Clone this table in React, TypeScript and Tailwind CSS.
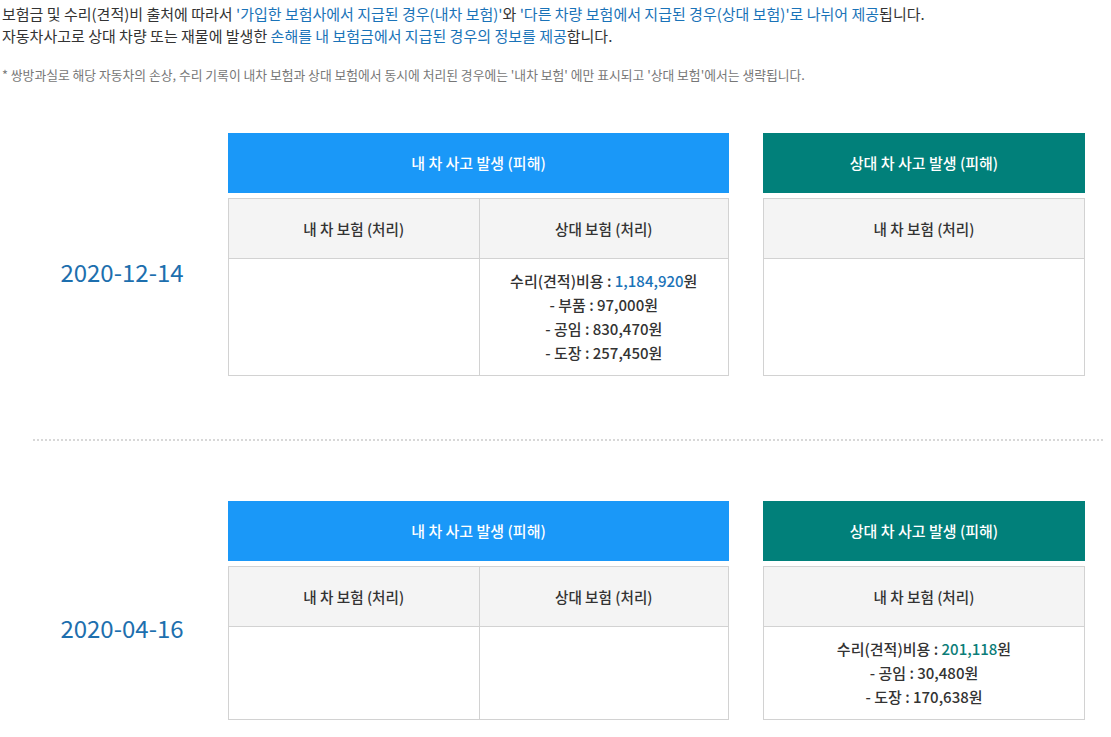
import React from "react";

type Line = { label: string; value: string; accent?: boolean };

type Section = {
  date: string;
  mine: Line[];
  other: Line[];
  received: Line[];
};

const sections: Section[] = [
  {
    date: "2020-12-14",
    mine: [],
    other: [
      { label: "수리(견적)비용 : ", value: "1,184,920", accent: true },
      { label: "- 부품 : ", value: "97,000" },
      { label: "- 공임 : ", value: "830,470" },
      { label: "- 도장 : ", value: "257,450" },
    ],
    received: [],
  },
  {
    date: "2020-04-16",
    mine: [],
    other: [],
    received: [
      { label: "수리(견적)비용 : ", value: "201,118", accent: true },
      { label: "- 공임 : ", value: "30,480" },
      { label: "- 도장 : ", value: "170,638" },
    ],
  },
];

const Cell = ({ lines, color }: { lines: Line[]; color: string }) => (
  <div className="flex flex-col items-center py-[10px] text-[15px] leading-[24px] font-medium text-[#333]">
    {lines.map((l, i) => (
      <div key={i}>
        {l.label}
        <span className={l.accent ? color : ""}>{l.value}</span>원
      </div>
    ))}
  </div>
);

const HeadCell = ({ children }: { children: React.ReactNode }) => (
  <div className="flex h-[59px] items-center justify-center bg-[#f4f4f4] text-[14.6px] font-medium text-[#333]">
    {children}
  </div>
);

const SectionRow = ({ s }: { s: Section }) => (
  <div className="flex">
    <div className="flex w-[228px] items-center justify-center pl-[16px] pt-[35px] text-[24px] text-[#1d6fae]">
      {s.date}
    </div>
    <div className="flex w-[501px] flex-col">
      <div className="flex h-[60px] items-center justify-center bg-[#1a98f8] text-[15px] font-medium text-white">
        내 차 사고 발생 (피해)
      </div>
      <div className="mt-[5px] flex flex-1 flex-col border border-[#d2d2d2]">
        <div className="grid grid-cols-2 border-b border-[#d2d2d2]">
          <HeadCell>내 차 보험 (처리)</HeadCell>
          <div className="border-l border-[#d2d2d2]">
            <HeadCell>상대 보험 (처리)</HeadCell>
          </div>
        </div>
        <div className="grid flex-1 grid-cols-2">
          <Cell lines={s.mine} color="text-[#1a73b8]" />
          <div className="border-l border-[#d2d2d2]">
            <Cell lines={s.other} color="text-[#1a73b8]" />
          </div>
        </div>
      </div>
    </div>
    <div className="ml-[34px] flex w-[322px] flex-col">
      <div className="flex h-[60px] items-center justify-center bg-[#01807a] text-[15px] font-medium text-white">
        상대 차 사고 발생 (피해)
      </div>
      <div className="mt-[5px] flex flex-1 flex-col border border-[#d2d2d2]">
        <div className="border-b border-[#d2d2d2]">
          <HeadCell>내 차 보험 (처리)</HeadCell>
        </div>
        <div className="flex-1">
          <Cell lines={s.received} color="text-[#0b7d78]" />
        </div>
      </div>
    </div>
  </div>
);

export default function App() {
  return (
    <div
      className="min-h-[737px] w-[1111px] bg-white text-[#333]"
      style={{ fontFamily: '"Noto Sans CJK KR", "Noto Sans", sans-serif' }}
    >
      <div className="pl-[2px] pt-[3px] text-[15px] leading-[22px]">
        <p>
          보험금 및 수리(견적)비 출처에 따라서{" "}
          <span className="text-[#1a73b8]">
            '가입한 보험사에서 지급된 경우(내차 보험)'
          </span>
          와{" "}
          <span className="text-[#1a73b8]">
            '다른 차량 보험에서 지급된 경우(상대 보험)'로 나뉘어 제공
          </span>
          됩니다.
        </p>
        <p>
          자동차사고로 상대 차량 또는 재물에 발생한{" "}
          <span className="text-[#1a73b8]">
            손해를 내 보험금에서 지급된 경우의 정보를 제공
          </span>
          합니다.
        </p>
      </div>
      <p className="mt-[19px] pl-[2px] text-[12.8px] leading-[18px] text-[#777]">
        * 쌍방과실로 해당 자동차의 손상, 수리 기록이 내차 보험과 상대 보험에서
        동시에 처리된 경우에는 '내차 보험' 에만 표시되고 '상대 보험'에서는
        생략됩니다.
      </p>

      <div className="mt-[49px]">
        <SectionRow s={sections[0]} />
      </div>
      <div className="ml-[33px] mr-[8px] mt-[63px] border-t-2 border-dotted border-[#d8d8d8]" />
      <div className="mt-[60px]">
        <SectionRow s={sections[1]} />
      </div>
    </div>
  );
}
